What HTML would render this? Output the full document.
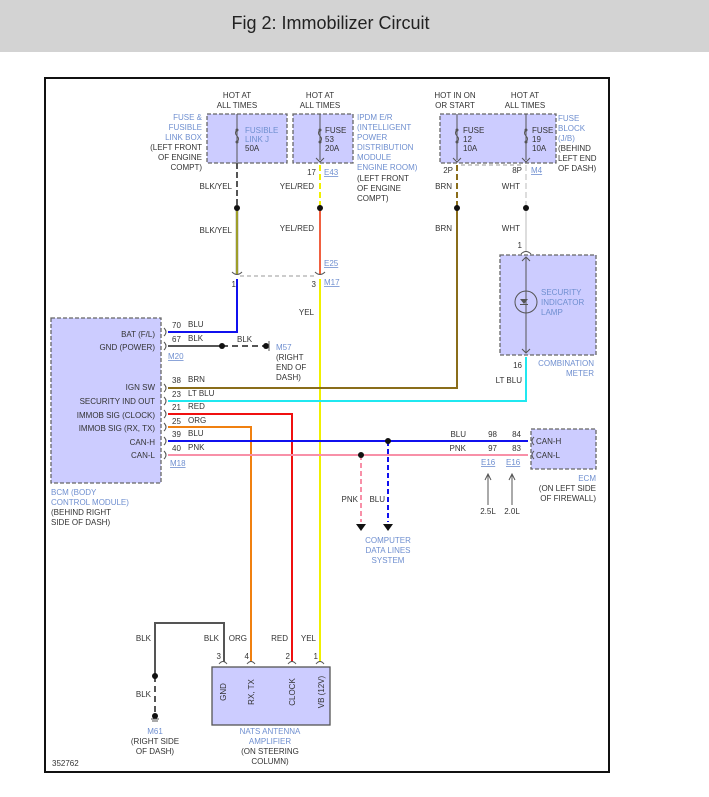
<!DOCTYPE html>
<html><head><meta charset="utf-8"><style>
html,body{margin:0;padding:0;background:#fff;width:709px;height:797px;overflow:hidden}
.hd{position:absolute;left:0;top:0;width:709px;height:52px;background:#d3d3d3;font:18px "Liberation Sans",sans-serif;color:#222;text-align:center;line-height:46px}
.hd span{position:relative;left:-24px}
svg{position:absolute;left:0;top:0}
text{font-family:"Liberation Sans",sans-serif;font-size:8px;fill:#333}
.b{fill:#6f8fd0}
.u{fill:#6f8fd0;text-decoration:underline}
</style></head><body>
<div class="hd"><span>Fig 2: Immobilizer Circuit</span></div>
<svg width="709" height="797" viewBox="0 0 709 797">
<rect x="45" y="78" width="564" height="694" fill="none" stroke="#111" stroke-width="2"/>
<!-- boxes -->
<g fill="#ccccff" stroke="#666" stroke-width="1.3" stroke-dasharray="4,2">
<rect x="207" y="114" width="80" height="49"/>
<rect x="293" y="114" width="60" height="49"/>
<rect x="440" y="114" width="116" height="49"/>
<rect x="500" y="255" width="96" height="100"/>
<rect x="51" y="318" width="110" height="165"/>
<rect x="531" y="429" width="65" height="40"/>
</g>
<rect x="212" y="667" width="118" height="58" fill="#ccccff" stroke="#555" stroke-width="1.3"/>
<!-- fuse internal lines -->
<g stroke="#555" stroke-width="1" fill="none">
<line x1="237" y1="114" x2="237" y2="163"/>
<line x1="320" y1="114" x2="320" y2="160"/>
<line x1="457" y1="114" x2="457" y2="160"/>
<line x1="526" y1="114" x2="526" y2="160"/>
<path d="M237 130 q-3 3 0 6 q3 3 0 6"/><path d="M320 130 q-3 3 0 6 q3 3 0 6"/>
<path d="M457 130 q-3 3 0 6 q3 3 0 6"/><path d="M526 130 q-3 3 0 6 q3 3 0 6"/>
<line x1="526" y1="258" x2="526" y2="352"/>
<circle cx="526" cy="302" r="11"/>
<path d="M316 158 l4 4 l4 -4 M453 158 l4 4 l4 -4 M522 158 l4 4 l4 -4 M522 261 l4 -4 l4 4 M522 349 l4 4 l4 -4"/>
</g>
<g fill="#555"><circle cx="237" cy="130" r="1.5"/><circle cx="237" cy="142" r="1.5"/><circle cx="320" cy="130" r="1.5"/><circle cx="320" cy="142" r="1.5"/><circle cx="457" cy="130" r="1.5"/><circle cx="457" cy="142" r="1.5"/><circle cx="526" cy="130" r="1.5"/><circle cx="526" cy="142" r="1.5"/>
<path d="M520 299 h8 l-4 5 z"/><rect x="520" y="304" width="8" height="1"/></g>
<!-- connector dashes -->
<g stroke="#999" stroke-width="1" stroke-dasharray="4,3" fill="none">
<line x1="240" y1="276" x2="316" y2="276"/>
<line x1="461" y1="165" x2="522" y2="165"/>
</g>
<!-- wires -->
<g fill="none" stroke-width="2">
<line x1="237" y1="163" x2="237" y2="208" stroke="#555" stroke-dasharray="6,3"/>
<line x1="237" y1="208" x2="237" y2="274" stroke="#555" stroke-width="2.4"/>
<line x1="237" y1="208" x2="237" y2="274" stroke="#e8e800" stroke-width="1"/>
<path d="M237 279 V332 H168" stroke="#1010ee"/>
<line x1="320" y1="165" x2="320" y2="208" stroke="#f0f000" stroke-dasharray="6,3"/>
<line x1="320" y1="208" x2="320" y2="274" stroke="#f06040"/>
<line x1="320" y1="279" x2="320" y2="662" stroke="#f0f000"/>
<line x1="457" y1="165" x2="457" y2="208" stroke="#8a6d1a" stroke-dasharray="6,3"/>
<path d="M457 208 V388 H168" stroke="#8a6d1a"/>
<line x1="526" y1="165" x2="526" y2="208" stroke="#ddd" stroke-dasharray="6,3"/>
<line x1="526" y1="208" x2="526" y2="252" stroke="#ddd"/>
<path d="M526 357 V401 H168" stroke="#20e8f0"/>
<path d="M168 414 H292 V662" stroke="#f01010"/>
<path d="M168 427 H251 V662" stroke="#f08010"/>
<line x1="168" y1="441" x2="528" y2="441" stroke="#1010ee"/>
<line x1="168" y1="455" x2="528" y2="455" stroke="#f890a8"/>
<line x1="388" y1="441" x2="388" y2="522" stroke="#1010ee" stroke-dasharray="5,3"/>
<line x1="361" y1="455" x2="361" y2="522" stroke="#f890a8" stroke-dasharray="5,3"/>
<path d="M168 346 H222" stroke="#555"/>
<line x1="222" y1="346" x2="266" y2="346" stroke="#555" stroke-dasharray="6,4"/>
<path d="M224 662 V623 H155 V676" stroke="#555"/>
<line x1="155" y1="676" x2="155" y2="714" stroke="#555" stroke-dasharray="6,4"/>
</g>
<!-- dots -->
<g fill="#111"><circle cx="237" cy="208" r="3"/><circle cx="320" cy="208" r="3"/><circle cx="457" cy="208" r="3"/><circle cx="526" cy="208" r="3"/>
<circle cx="222" cy="346" r="3"/><circle cx="266" cy="346" r="3"/><circle cx="388" cy="441" r="3"/><circle cx="361" cy="455" r="3"/><circle cx="155" cy="676" r="3"/><circle cx="155" cy="716" r="3"/>
<path d="M356 524 h10 l-5 7 z M383 524 h10 l-5 7 z"/></g>
<g stroke="#555" fill="none" stroke-width="1">
<line x1="269" y1="341" x2="269" y2="351"/><line x1="151" y1="719" x2="159" y2="719"/><line x1="152" y1="721" x2="158" y2="721"/>
<line x1="488" y1="505" x2="488" y2="475"/><line x1="512" y1="505" x2="512" y2="475"/>
<path d="M485 480 l3 -6 l3 6 M509 480 l3 -6 l3 6"/>
<path d="M164 328 q4 4 0 8 M164 342 q4 4 0 8 M164 384 q4 4 0 8 M164 397 q4 4 0 8 M164 410 q4 4 0 8 M164 423 q4 4 0 8 M164 437 q4 4 0 8 M164 451 q4 4 0 8"/>
<path d="M534 437 q-4 4 0 8 M534 451 q-4 4 0 8"/>
<path d="M232 272 q5 5 10 0 M315 272 q5 5 10 0 M219 664 q4 -5 8 0 M247 664 q4 -5 8 0 M288 664 q4 -5 8 0 M316 664 q4 -5 8 0 M521 254 q5 -5 10 0"/>
</g>
<g text-anchor="middle">
<text x="237" y="98">HOT AT</text><text x="237" y="108">ALL TIMES</text>
<text x="320" y="98">HOT AT</text><text x="320" y="108">ALL TIMES</text>
<text x="455" y="98">HOT IN ON</text><text x="455" y="108">OR START</text>
<text x="525" y="98">HOT AT</text><text x="525" y="108">ALL TIMES</text>
<text x="388" y="543" class="b">COMPUTER</text><text x="388" y="553" class="b">DATA LINES</text><text x="388" y="563" class="b">SYSTEM</text>
<text x="155" y="734" class="b">M61</text><text x="155" y="744">(RIGHT SIDE</text><text x="155" y="754">OF DASH)</text>
<text x="270" y="734" class="b">NATS ANTENNA</text><text x="270" y="744" class="b">AMPLIFIER</text><text x="270" y="754">(ON STEERING</text><text x="270" y="764">COLUMN)</text>
<text x="488" y="514">2.5L</text><text x="512" y="514">2.0L</text>
</g>
<g text-anchor="end">
<text x="202" y="120" class="b">FUSE &amp;</text><text x="202" y="130" class="b">FUSIBLE</text><text x="202" y="140" class="b">LINK BOX</text><text x="202" y="150">(LEFT FRONT</text><text x="202" y="160">OF ENGINE</text><text x="202" y="170">COMPT)</text>
<text x="232" y="189">BLK/YEL</text><text x="232" y="233">BLK/YEL</text>
<text x="314" y="189">YEL/RED</text><text x="314" y="231">YEL/RED</text>
<text x="314" y="315">YEL</text>
<text x="452" y="189">BRN</text><text x="452" y="231">BRN</text>
<text x="520" y="189">WHT</text><text x="520" y="231">WHT</text>
<text x="522" y="383">LT BLU</text>
<text x="155" y="337">BAT (F/L)</text><text x="155" y="350">GND (POWER)</text>
<text x="155" y="390">IGN SW</text><text x="155" y="404">SECURITY IND OUT</text><text x="155" y="418">IMMOB SIG (CLOCK)</text><text x="155" y="431">IMMOB SIG (RX, TX)</text><text x="155" y="445">CAN-H</text><text x="155" y="458">CAN-L</text>
<text x="236" y="287">1</text><text x="316" y="287">3</text><text x="316" y="175">17</text>
<text x="453" y="173">2P</text><text x="522" y="173">8P</text><text x="522" y="248">1</text><text x="522" y="368">16</text>
<text x="358" y="502">PNK</text><text x="385" y="502">BLU</text>
<text x="466" y="437">BLU</text><text x="466" y="451">PNK</text>
<text x="497" y="437">98</text><text x="497" y="451">97</text><text x="521" y="437">84</text><text x="521" y="451">83</text>
<text x="596" y="481" class="b">ECM</text><text x="596" y="491">(ON LEFT SIDE</text><text x="596" y="501">OF FIREWALL)</text>
<text x="594" y="366" class="b">COMBINATION</text><text x="594" y="376" class="b">METER</text>
<text x="151" y="641">BLK</text><text x="151" y="697">BLK</text>
<text x="219" y="641">BLK</text><text x="247" y="641">ORG</text><text x="288" y="641">RED</text><text x="316" y="641">YEL</text>
<text x="221" y="659">3</text><text x="249" y="659">4</text><text x="290" y="659">2</text><text x="318" y="659">1</text>
</g>
<text x="245" y="133" class="b">FUSIBLE</text><text x="245" y="142" class="b">LINK J</text><text x="245" y="151">50A</text>
<text x="325" y="133">FUSE</text><text x="325" y="142">53</text><text x="325" y="151">20A</text>
<text x="463" y="133">FUSE</text><text x="463" y="142">12</text><text x="463" y="151">10A</text>
<text x="532" y="133">FUSE</text><text x="532" y="142">19</text><text x="532" y="151">10A</text>
<text x="357" y="120" class="b">IPDM E/R</text><text x="357" y="130" class="b">(INTELLIGENT</text><text x="357" y="140" class="b">POWER</text><text x="357" y="150" class="b">DISTRIBUTION</text><text x="357" y="160" class="b">MODULE</text><text x="357" y="170" class="b">ENGINE ROOM)</text><text x="357" y="181">(LEFT FRONT</text><text x="357" y="191">OF ENGINE</text><text x="357" y="201">COMPT)</text>
<text x="558" y="121" class="b">FUSE</text><text x="558" y="131" class="b">BLOCK</text><text x="558" y="141" class="b">(J/B)</text><text x="558" y="151">(BEHIND</text><text x="558" y="161">LEFT END</text><text x="558" y="171">OF DASH)</text>
<text x="324" y="175" class="u">E43</text><text x="531" y="173" class="u">M4</text>
<text x="324" y="266" class="u">E25</text><text x="324" y="285" class="u">M17</text>
<text x="541" y="295" class="b">SECURITY</text><text x="541" y="305" class="b">INDICATOR</text><text x="541" y="315" class="b">LAMP</text>
<text x="172" y="328">70</text><text x="188" y="327">BLU</text>
<text x="172" y="342">67</text><text x="188" y="341">BLK</text><text x="237" y="342">BLK</text>
<text x="168" y="359" class="u">M20</text>
<text x="276" y="350" class="b">M57</text><text x="276" y="360">(RIGHT</text><text x="276" y="370">END OF</text><text x="276" y="380">DASH)</text>
<text x="172" y="383">38</text><text x="188" y="382">BRN</text>
<text x="172" y="397">23</text><text x="188" y="396">LT BLU</text>
<text x="172" y="410">21</text><text x="188" y="409">RED</text>
<text x="172" y="424">25</text><text x="188" y="423">ORG</text>
<text x="172" y="437">39</text><text x="188" y="436">BLU</text>
<text x="172" y="451">40</text><text x="188" y="450">PNK</text>
<text x="170" y="466" class="u">M18</text>
<text x="51" y="495" class="b">BCM (BODY</text><text x="51" y="505" class="b">CONTROL MODULE)</text><text x="51" y="515">(BEHIND RIGHT</text><text x="51" y="525">SIDE OF DASH)</text>
<text x="481" y="465" class="u">E16</text><text x="506" y="465" class="u">E16</text>
<text x="536" y="444">CAN-H</text><text x="536" y="458">CAN-L</text>
<text x="52" y="766">352762</text>
<g transform="translate(226,692) rotate(-90)"><text text-anchor="middle">GND</text></g>
<g transform="translate(254,692) rotate(-90)"><text text-anchor="middle">RX, TX</text></g>
<g transform="translate(295,692) rotate(-90)"><text text-anchor="middle">CLOCK</text></g>
<g transform="translate(324,692) rotate(-90)"><text text-anchor="middle">VB (12V)</text></g>
</svg>
</body></html>
